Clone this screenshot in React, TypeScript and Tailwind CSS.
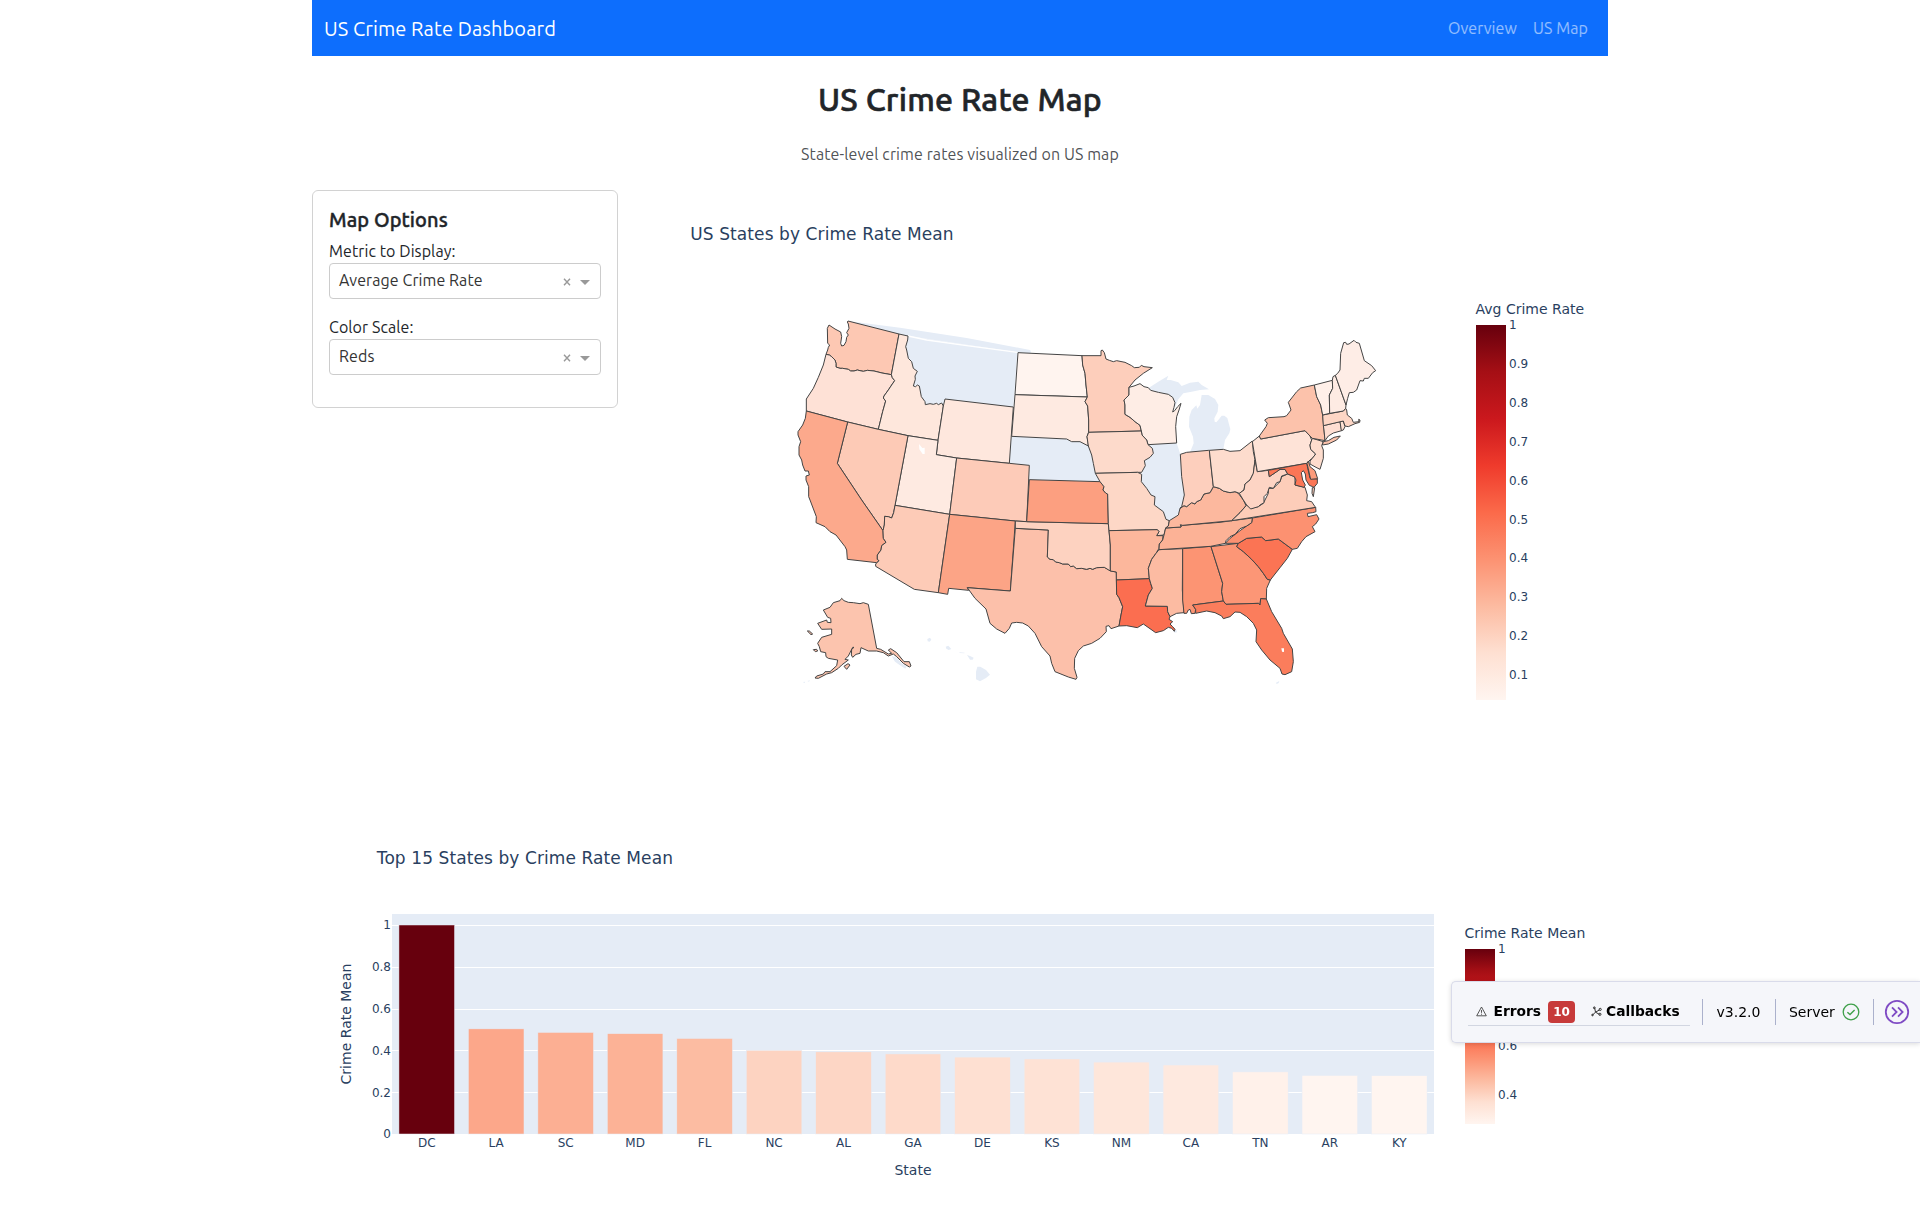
import { useState } from "react";

const REDS = [
  [255, 245, 240],
  [254, 224, 210],
  [252, 187, 161],
  [252, 146, 114],
  [251, 106, 74],
  [239, 59, 44],
  [203, 24, 29],
  [165, 15, 21],
  [103, 0, 13],
];

function reds(value: number, min: number) {
  const t = Math.min(Math.max((value - min) / (1 - min), 0), 1) * 8;
  const i = Math.min(Math.floor(t), 7);
  const c = REDS[i].map((a, k) => Math.round(a + (REDS[i + 1][k] - a) * (t - i)));
  return `rgb(${c.join(",")})`;
}

/* Outlines are digitised in tiles; a letter switches the tile, and each tile unit is a third of a pixel. */
const TILES: Record<string, [number, number]> = {
  A: [780, 300],
  B: [780, 500],
  D: [1000, 320],
  E: [1000, 500],
  F: [1180, 330],
  G: [1180, 500],
};
const MAP_X = 642;
const MAP_Y = 190;

function outline(points: string, close = true) {
  let origin = TILES.A;
  const out: string[] = [];
  for (const token of points.trim().split(/\s+/)) {
    if (TILES[token]) {
      origin = TILES[token];
      continue;
    }
    const [x, y] = token.split(",").map(Number);
    out.push(`${(origin[0] - MAP_X + x / 3).toFixed(2)},${(origin[1] - MAP_Y + y / 3).toFixed(2)}`);
  }
  return `M${out.join("L")}${close ? "Z" : ""}`;
}

const LAND = [
  "A 204,63 360,83 560,114 750,150 752,153 752,160 712,157 384,108 357,102",
  "A 384,108 712,157 700,321 495,297 490,318 485,309 475,314 470,310 460,313 450,311 436,314 435,305 424,290 418,258 412,255 400,258 406,238 405,228 412,214 400,205 395,185 385,175 380,150 377,140 383,120",
  "D 35,349 200,357 215,365 240,365 265,378 275,405 280,430 286,460 300,485 88,479 88,436 28,430",
  "D 444,374 530,369 541,403 545,470 553,525 545,560 540,575 E 530,45 510,62 498,58 490,35 D 465,555 463,530 453,525 440,505 424,485 425,463 436,437 433,422 450,412 460,400 457,385",
  "F 65,195 85,195 105,207 115,225 113,245 103,265 104,275 109,277 115,270 125,257 133,257 142,264 151,298 148,310 135,330 130,358 88,361 30,367 41,340 39,320 27,290 28,260 35,240 49,226 52,236 60,225",
  "D 447,203 475,185 505,167 500,180 512,180 535,187 545,198 570,188 595,185 605,195 627,208 600,210 575,215 550,220 535,238 525,262 518,232 505,223 475,217 452,211",
  "B 442,417 450,413 454,419 449,425 443,424",
  "B 497,440 505,437 514,447 506,450 499,446",
  "B 538,457 554,458 553,460 539,459",
  "B 561,465 570,468 581,473 578,479 570,479 565,471",
  "B 592,500 601,500 618,510 630,524 618,534 600,544 588,538 588,515",
  "B 335,468 350,473 365,490 380,500 376,506 360,496 345,485",
  "B 68,546 76,545 74,549",
  "B 82,543 90,541 87,545",
  "G 288,548 298,543 296,549 290,552",
  "E 520,393 530,391 531,397 524,398",
];

const STATES: [string, string, string][] = [
  ["WA", "#fdc8b3", "A 204,63 357,102 334,224 306,219 282,213 262,211 250,214 240,212 232,210 222,213 212,213 205,208 188,205 180,205 168,201 168,190 165,180 155,170 148,165 138,163 143,150 145,142 149,135 143,130 142,85 147,75 165,87 182,96 185,110 182,130 185,138 192,136 198,125 200,112 205,105 200,98 207,85 205,72 202,66"],
  ["OR", "#fee1d6", "A 138,163 148,165 155,170 165,180 168,190 168,201 180,205 188,205 205,208 212,213 222,213 232,210 240,212 250,214 262,211 282,213 306,219 334,224 337,233 344,242 335,255 325,270 312,288 310,294 317,303 308,335 295,388 203,366 79,333 79,297 100,265 115,232 130,195"],
  ["ID", "#fee7dc", "A 357,102 384,108 383,120 377,140 380,150 385,175 395,185 400,205 412,214 405,228 406,238 400,258 407,260 412,255 418,258 424,290 435,305 436,314 450,311 460,313 470,310 475,314 485,309 490,318 474,421 384,407 295,388 308,335 317,303 310,294 312,288 325,270 335,255 344,242 337,233 334,224"],
  ["WY", "#fee7dd", "A 495,297 700,321 688,490 530,474 469,464 474,421 490,318"],
  ["UT", "#feeae1", "A 384,407 474,421 469,464 530,474 509,643 345,616"],
  ["NV", "#fdcab6", "A 203,366 295,388 384,407 345,616 B 341,38 335,54 325,50 314,49 313,75 309,92 A 245,600 172,490"],
  ["CA", "#fca98c", "A 79,333 203,366 172,490 245,600 B 309,92 310,115 318,127 305,137 303,150 292,165 292,178 297,182 290,188 202,178 200,150 195,140 168,105 150,95 135,80 108,68 109,50 90,0 A 86,590 86,560 78,540 78,528 88,525 85,513 75,513 68,495 65,480 57,465 57,440 62,425 54,405 54,395 68,375 76,355"],
  ["AZ", "#fdcbb7", "B 345,16 509,43 475,278 403,268 287,199 287,192 297,182 292,178 292,165 303,150 305,137 318,127 310,115 309,92 313,75 314,49 325,50 335,54 341,38"],
  ["CO", "#fdcbb8", "A 530,474 688,490 748,496 B 740,65 706,63 509,43"],
  ["NM", "#fca486", "B 509,43 706,63 691,273 562,263 566,271 506,265 503,283 475,278"],
  ["TX", "#fcc0aa", "E 46,85 145,90 142,171 150,178 160,179 167,186 178,188 188,192 205,192 212,200 220,198 230,206 245,205 260,208 270,205 278,208 290,203 313,202 333,213 349,216 350,283 357,293 368,320 363,345 357,378 333,386 327,377 318,379 319,395 300,415 275,430 250,438 235,452 224,475 223,505 231,532 228,538 205,531 165,515 155,490 150,468 125,440 105,400 85,378 68,369 50,367 35,369 28,385 15,400 B 650,387 630,370 618,327 585,295 562,263 691,273"],
  ["OK", "#fdd2c0", "E 46,63 80,65 325,71 327,92 331,135 331,213 313,202 290,203 278,208 270,205 260,208 245,205 230,206 220,198 212,200 205,192 188,192 178,188 167,186 160,179 150,178 142,171 145,90 46,85"],
  ["KS", "#fc9f80", "D 88,479 300,485 307,492 312,500 309,510 318,520 323,522 E 325,71 80,65"],
  ["ND", "#fff4ef", "D 54,98 246,107 248,135 255,160 258,195 262,231 45,224"],
  ["SD", "#feeae1", "D 45,224 262,231 255,245 263,258 266,300 266,336 261,350 264,366 265,378 240,365 215,365 200,357 35,349"],
  ["MN", "#fdcebb", "D 246,107 303,107 303,92 307,90 313,98 318,117 328,121 340,125 350,122 375,127 395,137 403,143 418,142 424,136 432,140 457,143 430,160 405,180 387,202 387,225 372,240 375,255 375,283 390,292 405,305 420,316 424,333 266,337 266,300 263,258 255,245 262,231 258,195 255,160 248,135"],
  ["WI", "#feede5", "D 387,202 402,198 420,191 432,200 445,203 452,211 475,217 505,223 518,232 525,248 522,262 518,276 524,272 533,260 543,250 537,270 530,290 527,320 530,369 444,374 440,360 426,345 424,333 420,316 405,305 390,292 375,283 375,255 372,240 387,225"],
  ["IA", "#fddacb", "D 266,337 424,333 426,345 440,360 444,374 457,385 460,400 450,412 433,422 436,437 425,457 413,457 286,460 280,430 275,405 265,378 261,350"],
  ["MO", "#fdd7c6", "D 286,460 413,457 425,463 424,485 440,505 453,525 465,530 463,555 490,575 E 498,58 508,62 505,78 497,84 492,105 470,107 477,95 472,89 327,92 325,71 D 323,522 318,520 309,510 312,500 300,485"],
  ["AR", "#fcb79c", "E 327,92 472,89 477,95 470,107 489,107 488,120 478,132 477,145 468,160 455,178 445,205 448,236 349,240 349,216 331,213 331,135"],
  ["LA", "#fb6e50", "E 349,240 448,236 452,250 457,265 445,285 436,318 502,319 503,335 510,350 507,358 518,365 510,372 518,380 525,388 523,394 515,385 505,382 490,392 467,398 430,372 412,383 380,377 357,378 363,345 368,320 357,293 350,283"],
  ["MS", "#fcbba2", "E 477,149 548,146 547,270 552,338 530,340 510,350 503,335 502,319 436,318 445,285 457,265 452,250 448,236 445,205 455,178 468,160"],
  ["AL", "#fc9473", "E 548,146 632,139 G 93,140 128,250 125,275 130,303 38,315 47,328 45,340 34,341 30,328 25,330 20,340 12,340 8,300 8,146"],
  ["GA", "#fc9676", "G 93,140 175,130 170,140 190,155 215,178 235,200 250,220 262,238 271,240 260,265 259,297 242,296 240,315 236,310 138,313 130,303 125,275 128,250"],
  ["FL", "#fb7d5c", "G 38,315 130,303 138,313 236,310 240,315 242,296 259,297 275,335 305,385 310,400 337,447 340,485 335,515 315,524 306,522 300,505 270,480 245,450 228,425 230,390 220,370 200,350 180,337 165,336 150,350 130,356 125,348 105,338 80,333 47,340 47,328"],
  ["SC", "#fb7454", "G 175,130 200,115 245,111 257,122 295,117 337,148 322,175 300,203 285,222 271,240 262,238 250,220 235,200 215,178 190,155 170,140"],
  ["NC", "#fc9171", "G 217,54 407,22 408,35 398,38 382,40 384,50 410,44 417,57 407,72 397,80 405,95 378,110 365,125 352,145 337,148 295,117 257,122 245,111 200,115 175,130 136,130 150,115 180,92 200,78 215,68"],
  ["TN", "#fcb296", "E 497,84 543,81 545,76 660,67 G 155,62 217,54 215,68 200,78 180,86 165,103 150,110 138,122 136,130 E 632,139 477,149 478,132 488,120 492,105"],
  ["KY", "#fcb89e", "E 508,62 505,78 497,84 543,81 541,74 548,76 G 155,62 180,38 198,17 F 190,510 175,490 165,485 150,488 130,483 118,475 100,470 90,488 72,492 62,510 50,515 45,522 35,518 20,530 12,527 0,535 D 540,565 E 535,45"],
  ["IN", "#fdcfbd", "D 541,403 560,397 626,391 F 88,361 100,470 90,488 72,492 62,510 50,515 45,522 35,518 20,530 12,527 0,535 D 545,560 553,525 545,470"],
  ["OH", "#fddccd", "F 88,361 130,358 150,364 180,362 217,333 220,365 225,390 220,430 210,450 195,462 192,480 178,490 165,485 150,488 130,483 118,475 100,470"],
  ["VA", "#fdcdb9", "F 323,432 345,440 345,465 375,472 382,495 380,512 395,515 405,530 G 407,22 155,62 180,38 200,15 212,25 235,20 250,10 F 255,510 265,490 265,475 280,475 300,455 305,440"],
  ["WV", "#fdd4c4", "F 225,390 232,425 265,421 268,440 290,425 300,418 315,418 323,432 305,438 300,455 290,458 280,475 268,472 262,490 252,500 252,518 240,525 235,530 212,537 200,525 190,510 178,490 192,480 195,462 210,450 220,430"],
  ["PA", "#fee3d7", "F 217,335 238,318 242,327 375,302 390,318 395,330 390,345 392,358 407,372 397,385 390,390 380,400 232,425"],
  ["MD", "#fb7656", "F 265,421 380,400 390,445 412,447 412,460 402,472 398,470 388,466 378,450 376,432 370,422 364,428 368,450 376,465 372,472 345,465 348,450 343,440 323,432 315,418 300,418 290,425 268,440"],
  ["DE", "#fc9b7b", "F 385,393 390,410 405,422 413,446 392,448 381,400"],
  ["VA2", "#fdcdb9", "F 397,473 404,473 400,500 396,490"],
  ["NJ", "#fddccd", "F 397,325 430,335 425,347 430,360 430,385 420,418 408,412 390,402 390,393 397,385 407,372 392,358 390,345 395,330"],
  ["NY", "#fcc2ab", "F 403,165 410,200 422,225 428,255 432,300 435,332 425,330 397,325 390,318 375,302 242,327 238,318 258,290 262,280 254,270 265,263 312,260 320,257 333,240 325,217 350,185 362,174"],
  ["NY2", "#fcc2ab", "F 427,345 430,335 445,332 462,322 481,318 470,330 445,342"],
  ["CT", "#feded2", "F 430,287 480,275 485,302 460,309 445,318 435,332 432,300"],
  ["RI", "#fee0d2", "F 480,275 490,273 495,290 490,300 484,302"],
  ["MA", "#fdd6c5", "F 428,255 490,243 497,235 500,240 502,255 515,265 520,277 537,275 536,268 540,270 539,277 525,281 505,290 495,288 490,273 430,287"],
  ["VT", "#fff0e9", "F 403,165 457,151 458,175 448,195 449,250 428,255 422,225 410,200"],
  ["NH", "#feebe3", "F 457,151 459,140 466,136 498,225 497,235 490,243 449,250 448,195 458,175"],
  ["ME", "#feede6", "F 466,136 473,130 480,120 482,70 491,38 497,37 500,43 507,42 522,31 528,37 538,40 553,92 575,107 587,122 578,128 565,145 553,145 550,153 540,152 530,180 520,187 508,188 503,205 498,225"],
  ["AK", "#fcc4ae", "B 265,313 290,445 302,448 325,462 335,460 325,450 332,446 350,458 372,485 388,485 393,498 388,501 370,490 350,470 340,462 325,468 310,458 290,453 265,453 243,443 240,460 228,463 218,472 214,465 215,448 222,442 218,442 205,468 195,478 205,480 185,495 175,505 155,518 140,522 115,535 105,534 110,528 130,522 135,515 150,515 170,497 173,480 145,475 138,470 137,458 122,455 118,440 113,430 125,412 155,403 155,387 125,388 113,370 140,360 142,367 153,368 152,355 143,352 130,330 150,322 160,308 180,302 185,295 192,302 205,307 220,308 240,311 250,308"],
  ["AK2", "#fcc4ae", "B 82,393 88,393 98,402 93,404"],
  ["AK3", "#fcc4ae", "B 100,449 110,448 113,453 106,455"],
  ["AK4", "#fcc4ae", "B 192,499 204,491 210,495 200,508"],
];

const WATER = [
  "A 417,432 427,444 434,443 434,462 428,462 418,448",
  "G 304,445 312,445 312,456 306,455",
];

const COLORBAR =
  "bg-[linear-gradient(to_top,rgb(255,245,240),rgb(254,224,210),rgb(252,187,161),rgb(252,146,114),rgb(251,106,74),rgb(239,59,44),rgb(203,24,29),rgb(165,15,21),rgb(103,0,13))]";

const PLOT_FONT = "font-['DejaVu_Sans','Verdana',sans-serif] tracking-normal";

function StatesMap() {
  const ticks = [1, 0.9, 0.8, 0.7, 0.6, 0.5, 0.4, 0.3, 0.2, 0.1];
  return (
    <div className={`relative h-[600px] w-[966px] ${PLOT_FONT} text-[#2a3f5f]`}>
      <svg width="966" height="600" viewBox="0 0 966 600" className="block">
        <text x="48.3" y="49.5" fontSize="17" letterSpacing="0.09" fill="#2a3f5f">
          US States by Crime Rate Mean
        </text>
        {LAND.map((p) => (
          <path key={p} d={outline(p)} fill="#e5ecf6" />
        ))}
        <path d={outline("A 384,108 440,120 560,137 712,157", false)} fill="none" stroke="#fff" strokeWidth="1.3" />
        {STATES.map(([id, fill, p]) => (
          <path key={id} d={outline(p)} fill={fill} stroke="#444" strokeWidth="1" strokeLinejoin="round" />
        ))}
        {WATER.map((p) => (
          <path key={p} d={outline(p)} fill="#fff" />
        ))}
      </svg>
      <div className="absolute left-[833.5px] top-[111px] text-sm leading-4 whitespace-nowrap">Avg Crime Rate</div>
      <div className={`absolute left-[834px] top-[135px] h-[375px] w-[30px] ${COLORBAR}`} />
      <div className="absolute left-[867px] top-[128px] text-xs leading-[14px]">
        {ticks.map((t) => (
          <div key={t} className="h-[38.85px]">
            {t}
          </div>
        ))}
      </div>
    </div>
  );
}

const BARS: [string, number][] = [
  ["DC", 1],
  ["LA", 0.503],
  ["SC", 0.486],
  ["MD", 0.48],
  ["FL", 0.457],
  ["NC", 0.4],
  ["AL", 0.393],
  ["GA", 0.383],
  ["DE", 0.368],
  ["KS", 0.359],
  ["NM", 0.344],
  ["CA", 0.33],
  ["TN", 0.297],
  ["AR", 0.28],
  ["KY", 0.279],
];

function TopStatesChart() {
  const left = 80;
  const top = 99;
  const width = 1042;
  const height = 220;
  const y = (v: number) => top + height - v * 209;
  const slot = width / BARS.length;
  return (
    <div className={`relative h-[399px] w-[1296px] ${PLOT_FONT} text-[#2a3f5f]`}>
      <svg width="1296" height="399" viewBox="0 0 1296 399" className="block" fill="#2a3f5f">
        <text x="64.8" y="49" fontSize="17" letterSpacing="0.09">
          Top 15 States by Crime Rate Mean
        </text>
        <rect x={left} y={top} width={width} height={height} fill="#e5ecf6" />
        {[0.2, 0.4, 0.6, 0.8, 1].map((v) => (
          <rect key={v} x={left} y={Math.round(y(v))} width={width} height="1" fill="#fff" />
        ))}
        {BARS.map(([s, v], i) => (
          <g key={s}>
            <rect
              x={left + i * slot + slot * 0.1}
              y={y(v)}
              width={slot * 0.8}
              height={v * 209}
              fill={reds(v, 0.279)}
              stroke="#e5ecf6"
              strokeWidth="0.5"
            />
            <text x={left + (i + 0.5) * slot} y="332" fontSize="12" textAnchor="middle">
              {s}
            </text>
          </g>
        ))}
        {[0, 0.2, 0.4, 0.6, 0.8, 1].map((v) => (
          <text key={v} x="79" y={y(v) + 4.3} fontSize="12" textAnchor="end">
            {v}
          </text>
        ))}
        <text x="601" y="360" fontSize="14" textAnchor="middle">
          State
        </text>
        <text transform="translate(39 209) rotate(-90)" fontSize="14" textAnchor="middle">
          Crime Rate Mean
        </text>
      </svg>
      <div className="absolute left-[1152.5px] top-[110px] text-sm leading-4 whitespace-nowrap">Crime Rate Mean</div>
      <div className={`absolute left-[1153px] top-[134px] h-[175px] w-[30px] ${COLORBAR}`} />
      <div className="absolute left-[1186px] top-[127px] text-xs leading-[14px]">
        <div className="h-[97px]">1</div>
        <div className="h-[48.5px]">0.6</div>
        <div>0.4</div>
      </div>
    </div>
  );
}

function Dropdown({ label, initial }: { label: string; initial: string }) {
  const [value, setValue] = useState(initial);
  return (
    <div className="mb-4">
      <label className="block leading-6">{label}</label>
      <div className="flex h-9 items-center rounded border border-[#ccc] bg-white pl-[9px] pr-[10px]">
        <span className="flex-1 pb-0.5 leading-8 text-[#333]">{value}</span>
        <button onClick={() => setValue("")} className="mt-0.5 mr-[9.5px]" aria-label="Clear">
          <svg width="8" height="8" viewBox="0 0 8 8" className="block" fill="none" stroke="#999" strokeWidth="1.4">
            <path d="M1 .7 7 7.3M7 .7 1 7.3" />
          </svg>
        </button>
        <svg width="10" height="5" viewBox="0 0 10 5" className="mt-[3px]">
          <path d="M0 0h10L5 5Z" fill="#999" />
        </svg>
      </div>
    </div>
  );
}

function DebugMenu() {
  return (
    <div className="fixed right-0 top-[981px] flex h-[62px] w-[469px] items-start rounded-l-[5px] rounded-r-none border border-r-0 border-[#d9dbea] bg-[#f5f6fa] pl-4 pt-[17px] font-['DejaVu_Sans','Verdana',sans-serif] text-sm tracking-normal text-black shadow-[0_1px_5px_rgba(0,0,0,0.15)]">
      <div className="flex h-[27px] w-[221.5px] items-center border-b border-[#d2d6e1] pl-[7.5px]">
        <svg width="11" height="11" viewBox="0 0 11 11" className="mb-0.5" fill="none" stroke="#444" strokeWidth="0.9" strokeLinejoin="round">
          <path d="M5.5 1 10.3 9.8H.7Z" />
          <path d="M5.5 4v2.8M5.5 7.7v1" />
        </svg>
        <span className="ml-[7px] w-[47.5px] text-[13.8px] font-bold">Errors</span>
        <span className="ml-[7px] flex h-[22px] w-[27px] items-center justify-center rounded bg-[#c73a3a] text-xs font-bold text-white">10</span>
        <svg width="11" height="11" viewBox="0 0 11 11" className="mb-0.5 ml-[15.5px]" fill="none" stroke="#333" strokeWidth="1">
          <path d="M1 9.5 4.5 6.2 3.6 1.6M4.5 6.2l4.2-2.4M4.5 6.2l4 2.2" />
          <circle cx="1.5" cy="9" r="0.8" />
          <circle cx="3.3" cy="1.8" r="0.9" />
          <circle cx="9.2" cy="3.4" r="1.1" />
          <circle cx="8.9" cy="8.3" r="1.1" />
        </svg>
        <span className="ml-[4.5px] text-[13.8px] font-bold">Callbacks</span>
      </div>
      <div className="ml-3 h-[26px] w-px bg-[#abb1cc]" />
      <span className="ml-3.5 leading-[27px]">v3.2.0</span>
      <div className="ml-[15px] h-[26px] w-px bg-[#abb1cc]" />
      <span className="ml-[12.5px] leading-[27px]">Server</span>
      <svg width="18" height="18" viewBox="0 0 18 18" className="ml-[7px] mt-1" fill="none" stroke="#3fa04a">
        <circle cx="9" cy="9" r="7.8" strokeWidth="1.3" />
        <path d="M5.4 9.2 8 11.6l4.6-4.6" strokeWidth="1.4" />
      </svg>
      <div className="ml-[13.5px] h-[26px] w-px bg-[#abb1cc]" />
      <svg width="26" height="26" viewBox="0 0 26 26" className="ml-[10px]" fill="none" stroke="#7f4bc4" strokeWidth="1.8">
        <circle cx="13" cy="13" r="11.2" />
        <path d="M8 8.4l4.6 4.6L8 17.6M14 8.4l4.6 4.6-4.6 4.6" />
      </svg>
    </div>
  );
}

export default function App() {
  return (
    <div className="h-[1214px] overflow-hidden bg-white font-['Ubuntu','Noto_Sans',sans-serif] text-base tracking-[0.09px] text-[#212529]">
      <div className="mx-auto w-[1296px]">
        <nav className="flex h-14 items-center bg-[#0d6efd] px-3">
          <span className="flex-1 pt-px text-xl text-white">US Crime Rate Dashboard</span>
          <a className="px-2 text-white/55">Overview</a>
          <a className="px-2 text-white/55">US Map</a>
        </nav>
        <h2 className="mt-6 text-center text-[32px] leading-[38.4px] font-medium tracking-[0.24px] [-webkit-text-stroke:0.6px_#212529]">
          US Crime Rate Map
        </h2>
        <p className="mt-6 text-center leading-6 tracking-[0.1px] text-[#212529]/80">State-level crime rates visualized on US map</p>
        <div className="mt-6 flex items-start justify-between">
          <section className="h-[217.5px] w-[306px] rounded-md border border-black/[0.175] p-4">
            <h5 className="mb-[7px] pt-px text-xl leading-6 font-medium [-webkit-text-stroke:0.4px_#212529]">Map Options</h5>
            <Dropdown label="Metric to Display:" initial="Average Crime Rate" />
            <Dropdown label="Color Scale:" initial="Reds" />
          </section>
          <StatesMap />
        </div>
        <div className="mt-[24.6px]">
          <TopStatesChart />
        </div>
      </div>
      <DebugMenu />
    </div>
  );
}
